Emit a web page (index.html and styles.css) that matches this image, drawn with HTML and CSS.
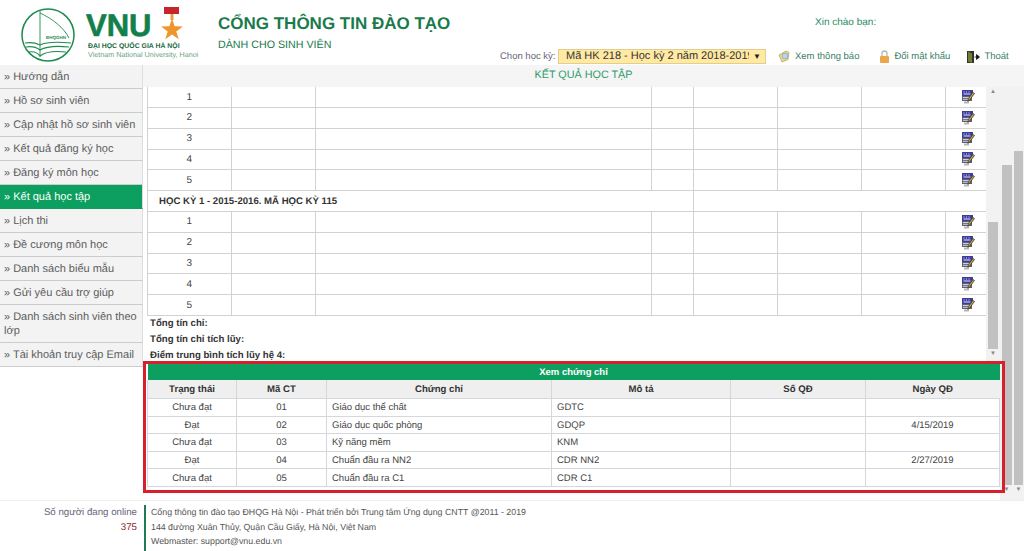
FILE: index.html
```html
<!DOCTYPE html>
<html lang="vi">
<head>
  <meta charset="UTF-8" />
  <meta name="viewport" content="width=device-width, initial-scale=1.0"/>
  <title>Cổng thông tin đào tạo</title>
  <link rel="stylesheet" href="styles.css">
</head>
<body>
  <svg class="defs" width="0" height="0">
    <symbol id="edit" viewBox="0 0 14 14">
      <rect x="1" y="0" width="11" height="6" fill="#3c3c9c"/>
      <path d="M2.500 2h1M5 2h1M7.500 2h1M2.500 4h7" stroke="#dfe0f5" stroke-width="1"/>
      <rect x="1" y="6" width="10" height="5" fill="#5f5f78"/>
      <path d="M2 7.500h7M2 9.300h6" stroke="#dcdce6" stroke-width=".9"/>
      <rect x="3" y="11.500" width="5" height="2" fill="#b5b5b5"/>
      <path d="M13.500 3.500l-4.500 6-2 2 .4-3 4.500-6z" fill="#c9a23a" stroke="#2c2c2c" stroke-width=".7"/>
    </symbol>
  </svg>

  <div class="header">
    <div class="logo">
      <svg class="seal" width="56" height="56" viewBox="0 0 56 56">
        <circle cx="27" cy="28" r="26" fill="#fff" stroke="#1f8a50" stroke-width="1.500"/>
        <path d="M19 4v46M19 6c13 6 24 15 29 25" fill="none" stroke="#1f8a50" stroke-width=".9"/>
        <path d="M4 36c6-1 11 0 15 2 6-3 20-3 31-2M5 40c6-1 10 0 14 3 7-4 20-4 29-3M8 45c5-1 8 0 11 4 6-5 17-5 26-4" fill="none" stroke="#1f8a50" stroke-width="1.100"/>
        <text class="seal-text" x="35" y="32" text-anchor="middle">ĐHQGHN</text>
      </svg>
      <div class="wordmark">
        <div class="vnu-row">
          <span class="vnu">VNU</span>
          <svg width="24" height="36" viewBox="0 0 24 36">
            <rect x="4" y="1" width="15" height="7" fill="#c8242c"/>
            <rect x="10.500" y="8" width="3" height="6" fill="#e2a23a"/>
            <path d="M12 12.500l2.650 7.860 8.250.09-6.620 4.940 2.480 7.910L12 28.500l-6.760 4.800 2.480-7.910-6.620-4.940 8.250-.09z" fill="#f0952a"/>
          </svg>
        </div>
        <div class="vnu-name">ĐẠI HỌC QUỐC GIA HÀ NỘI</div>
        <div class="vnu-en">Vietnam National University, Hanoi</div>
      </div>
    </div>
    <div class="portal">
      <div class="portal-name">CỔNG THÔNG TIN ĐÀO TẠO</div>
      <div class="portal-sub">DÀNH CHO SINH VIÊN</div>
    </div>
    <div class="user-box">
      <div class="hello">Xin chào bạn:</div>
      <div class="tools">
        <span class="term-label">Chọn học kỳ:</span>
        <div class="term-select"><span class="term-value">Mã HK 218 - Học kỳ 2 năm 2018-2019</span><span class="term-arrow">▼</span></div>
        <a class="tool tool-notice">
          <svg width="13" height="13" viewBox="0 0 13 13">
            <path d="M1 5l7-4 3 1.500-1 7-6 2.500z" fill="#f1d98a" stroke="#b79a4c" stroke-width=".7"/>
            <circle cx="7" cy="6" r="3" fill="#b8d3ea" stroke="#7b9ab5" stroke-width=".6"/>
          </svg>Xem thông báo</a>
        <a class="tool tool-lock">
          <svg width="11" height="14" viewBox="0 0 11 14">
            <path d="M3 6V3.500a2.500 2.500 0 015 0V6" fill="none" stroke="#b9b9a8" stroke-width="1.300"/>
            <rect x="1" y="6" width="9" height="7" rx="1" fill="#eda54a"/>
          </svg>Đổi mật khẩu</a>
        <a class="tool tool-exit">
          <svg width="13" height="14" viewBox="0 0 13 14">
            <path d="M0 1h7v12H0z" fill="#33332a"/>
            <path d="M1 1.500l4 2v9.500l-4-1.500z" fill="#6f7f3a"/>
            <path d="M7.500 7h2.500M9.500 4.500L12.500 7l-3 2.500z" fill="#111" stroke="#111" stroke-width=".8"/>
          </svg>Thoát</a>
      </div>
    </div>
  </div>

  <div class="main">
    <ul class="sidebar">
      <li>» Hướng dẫn</li>
      <li>» Hồ sơ sinh viên</li>
      <li>» Cập nhật hồ sơ sinh viên</li>
      <li>» Kết quả đăng ký học</li>
      <li>» Đăng ký môn học</li>
      <li class="active">» Kết quả học tập</li>
      <li>» Lịch thi</li>
      <li>» Đề cương môn học</li>
      <li>» Danh sách biểu mẫu</li>
      <li>» Gửi yêu cầu trợ giúp</li>
      <li>» Danh sách sinh viên theo lớp</li>
      <li>» Tài khoản truy cập Email</li>
    </ul>

    <div class="content">
      <div class="page-title">KẾT QUẢ HỌC TẬP</div>
      <div class="panes">
        <div class="panes-body">
          <div class="results-pane">
            <div class="results">
              <table class="grades">
                <colgroup><col class="c-first"><col class="c-no"><col class="c-name"><col class="c-sm"><col class="c-no"><col class="c-no"><col class="c-no"><col class="c-sm2"></colgroup>
                <tr class="first"><td>1</td><td></td><td></td><td></td><td></td><td></td><td></td><td><svg class="edit"><use href="#edit"/></svg></td></tr>
                <tr><td>2</td><td></td><td></td><td></td><td></td><td></td><td></td><td><svg class="edit"><use href="#edit"/></svg></td></tr>
                <tr><td>3</td><td></td><td></td><td></td><td></td><td></td><td></td><td><svg class="edit"><use href="#edit"/></svg></td></tr>
                <tr><td>4</td><td></td><td></td><td></td><td></td><td></td><td></td><td><svg class="edit"><use href="#edit"/></svg></td></tr>
                <tr><td>5</td><td></td><td></td><td></td><td></td><td></td><td></td><td><svg class="edit"><use href="#edit"/></svg></td></tr>
                <tr class="term-row"><td colspan="4">HỌC KỲ 1 - 2015-2016. MÃ HỌC KỲ 115</td><td colspan="4"></td></tr>
                <tr><td>1</td><td></td><td></td><td></td><td></td><td></td><td></td><td><svg class="edit"><use href="#edit"/></svg></td></tr>
                <tr><td>2</td><td></td><td></td><td></td><td></td><td></td><td></td><td><svg class="edit"><use href="#edit"/></svg></td></tr>
                <tr><td>3</td><td></td><td></td><td></td><td></td><td></td><td></td><td><svg class="edit"><use href="#edit"/></svg></td></tr>
                <tr><td>4</td><td></td><td></td><td></td><td></td><td></td><td></td><td><svg class="edit"><use href="#edit"/></svg></td></tr>
                <tr><td>5</td><td></td><td></td><td></td><td></td><td></td><td></td><td><svg class="edit"><use href="#edit"/></svg></td></tr>
              </table>
              <div class="totals">
                <div>Tổng tín chỉ:</div>
                <div>Tổng tín chỉ tích lũy:</div>
                <div>Điểm trung bình tích lũy hệ 4:</div>
              </div>
            </div>
            <div class="scrollbar bar-results"><span class="arrow">▲</span><span class="thumb"></span><span class="arrow">▼</span></div>
          </div>
          <div class="certs">
            <table class="cert-table">
              <colgroup><col class="k-status"><col class="k-code"><col class="k-name"><col class="k-desc"><col class="k-no"><col></colgroup>
              <tr class="cert-title"><th colspan="6">Xem chứng chỉ</th></tr>
              <tr class="cert-head"><th>Trạng thái</th><th>Mã CT</th><th>Chứng chỉ</th><th>Mô tả</th><th>Số QĐ</th><th>Ngày QĐ</th></tr>
              <tr><td class="mid">Chưa đạt</td><td class="mid">01</td><td>Giáo dục thể chất</td><td>GDTC</td><td></td><td class="mid"></td></tr>
              <tr><td class="mid">Đạt</td><td class="mid">02</td><td>Giáo dục quốc phòng</td><td>GDQP</td><td></td><td class="mid">4/15/2019</td></tr>
              <tr><td class="mid">Chưa đạt</td><td class="mid">03</td><td>Kỹ năng mềm</td><td>KNM</td><td></td><td class="mid"></td></tr>
              <tr><td class="mid">Đạt</td><td class="mid">04</td><td>Chuẩn đầu ra NN2</td><td>CDR NN2</td><td></td><td class="mid">2/27/2019</td></tr>
              <tr><td class="mid">Chưa đạt</td><td class="mid">05</td><td>Chuẩn đầu ra C1</td><td>CDR C1</td><td></td><td class="mid"></td></tr>
            </table>
          </div>
        </div>
        <div class="scrollbar bar-middle"><span class="thumb"></span><span class="arrow">▼</span></div>
        <div class="scrollbar bar-outer"><span class="thumb"></span><span class="arrow">▼</span></div>
      </div>
    </div>
  </div>

  <div class="footer">
    <div class="online">
      <div>Số người đang online</div>
      <div class="online-count">375</div>
    </div>
    <div class="footer-info">
      <div>Cổng thông tin đào tạo ĐHQG Hà Nội - Phát triển bởi Trung tâm Ứng dụng CNTT @2011 - 2019</div>
      <div>144 đường Xuân Thủy, Quận Cầu Giấy, Hà Nội, Việt Nam</div>
      <div>Webmaster: support@vnu.edu.vn</div>
    </div>
  </div>
</body>
</html>
```

FILE: styles.css
```css
html, body {
  margin: 0;
  height: 551px;
  overflow: hidden;
  background: #fff;
  font-family: "Liberation Sans", Arial, sans-serif;
  color: #444;
  text-rendering: geometricPrecision;
}
.defs {
  position: absolute;
}

/* header */
.header {
  display: flex;
  height: 65px;
}
.logo {
  display: flex;
  width: 218px;
  padding: 7px 0 0 21px;
  box-sizing: border-box;
}
.seal {
  flex: none;
}
.seal-text {
  font-size: 4.5px;
  font-weight: bold;
  fill: #1f8a50;
}
.wordmark {
  margin-left: 9px;
}
.vnu-row {
  display: flex;
  height: 37px;
  margin-top: -1px;
}
.vnu-row svg {
  margin-left: 9px;
}
.vnu {
  font-size: 31px;
  font-weight: bold;
  line-height: 40px;
  color: #12804a;
  -webkit-text-stroke: .6px #12804a;
}
.vnu-name {
  margin-left: 2px;
  font-size: 6.9px;
  font-weight: bold;
  line-height: 8px;
  color: #1d6b45;
  white-space: nowrap;
}
.vnu-en {
  margin-left: 2px;
  font-size: 7.2px;
  line-height: 8px;
  color: #6aa383;
  white-space: nowrap;
}
.portal {
  width: 280px;
  padding-top: 14px;
  color: #1a7a4c;
}
.portal-name {
  font-size: 17px;
  font-weight: bold;
  line-height: 19px;
  white-space: nowrap;
}
.portal-sub {
  margin-top: 5px;
  font-size: 10.7px;
  line-height: 14px;
  white-space: nowrap;
}
.user-box {
  flex: 1;
  font-size: 10px;
}
.hello {
  height: 49px;
  padding: 17px 0 0 317px;
  box-sizing: border-box;
  color: #2b8a60;
}
.tools {
  display: flex;
  align-items: center;
  height: 15px;
  margin-left: 2px;
  font-size: 9.5px;
  white-space: nowrap;
}
.term-label {
  width: 58px;
  color: #667;
}
.term-select {
  display: flex;
  justify-content: space-between;
  width: 208px;
  height: 15px;
  padding: 0 4px 0 7px;
  box-sizing: border-box;
  background: #ffe9a3;
  border: 1px solid #e3cf8c;
  font-size: 11px;
  line-height: 13px;
  color: #333;
}
.term-value {
  width: 183px;
  overflow: hidden;
}
.term-arrow {
  font-size: 8px;
  color: #222;
}
.tool {
  display: flex;
  align-items: center;
  color: #3a8069;
}
.tool svg {
  margin-right: 4px;
}
.tool-notice {
  margin-left: 12px;
}
.tool-lock {
  margin-left: 20px;
}
.tool-exit {
  margin-left: 17px;
}

/* sidebar and main */
.main {
  display: flex;
  height: 435px;
}
.sidebar {
  flex: none;
  width: 143px;
  margin: 0;
  padding: 0;
  list-style: none;
  font-size: 11px;
  color: #5c5c5c;
}
.sidebar li {
  padding: 5px 4px 4px;
  line-height: 14px;
  background: #f3f3f3;
  border-bottom: 1px solid #ccc;
  border-right: 1px solid #ddd;
}
.sidebar li.active {
  background: #0d9f5f;
  border-bottom-color: #0d9f5f;
  color: #fff;
}
.content {
  flex: 1;
  min-width: 0;
}
.page-title {
  height: 22px;
  background: #f5f5f5;
  font-size: 10.8px;
  line-height: 21px;
  text-align: center;
  color: #2d9b6c;
}
.panes {
  display: flex;
  height: 413px;
}
.panes-body {
  flex: 1;
  min-width: 0;
}
.results-pane {
  display: flex;
  height: 275px;
}
.results {
  flex: 1;
  min-width: 0;
  padding-left: 4px;
}
.grades {
  width: 839px;
  border-collapse: collapse;
  table-layout: fixed;
  font-size: 10px;
}
.c-first { width: 83.5px; }
.c-no { width: 84px; }
.c-name { width: 336px; }
.c-sm { width: 42px; }
.c-sm2 { width: 41.5px; }
.grades td {
  height: 19.8px;
  padding: 0;
  border: 1px solid #d2d2d2;
  text-align: center;
  vertical-align: middle;
}
.grades .first td {
  height: 20px;
  border-top: 0;
}
.grades .term-row td {
  padding-left: 11px;
  font-size: 9.6px;
  font-weight: bold;
  text-align: left;
  color: #333;
}
.edit {
  display: block;
  width: 14px;
  height: 14px;
  margin-left: 15px;
}
.totals {
  padding-left: 3px;
  font-size: 9.65px;
  font-weight: bold;
  line-height: 16px;
  color: #333;
}

/* fake browser scrollbars, the page has three nested ones */
.scrollbar {
  display: flex;
  flex-direction: column;
  align-items: center;
  flex: none;
  background: #f2f2f2;
  color: #888;
}
.scrollbar .arrow {
  font-size: 6px;
  line-height: 10px;
}
.thumb {
  display: block;
  background: #c1c1c1;
}
.bar-results {
  width: 14px;
}
.bar-results .thumb {
  width: 10px;
  height: 127px;
  margin-top: 125px;
}
.bar-middle {
  width: 13px;
  padding-top: 78px;
  box-sizing: border-box;
}
.bar-middle .thumb {
  width: 10px;
  height: 320px;
}
.bar-outer {
  width: 11px;
  padding-top: 64px;
  box-sizing: border-box;
}
.bar-outer .thumb {
  width: 9px;
  height: 334px;
}

/* certificates, with the red box drawn over it */
.certs {
  position: relative;
  margin: 2px 0 0 4px;
}
.certs::after {
  content: "";
  position: absolute;
  top: -3px;
  left: -4px;
  width: 862px;
  height: 132px;
  box-sizing: border-box;
  border: 3.5px solid #d8202c;
}
.cert-table {
  width: 853px;
  border-collapse: collapse;
  table-layout: fixed;
  font-size: 9.5px;
  color: #444;
}
.k-status { width: 89px; }
.k-code { width: 90px; }
.k-name { width: 225px; }
.k-desc { width: 179px; }
.k-no { width: 135px; }
.cert-title th {
  height: 16px;
  padding: 0;
  background: #0d9f5f;
  color: #fff;
  font-size: 9.5px;
}
.cert-head th {
  height: 17px;
  padding: 1px 0 0;
  background: #efefef;
  border-left: 1px solid #d4d8dc;
  border-bottom: 1px solid #d4d8dc;
  color: #333;
  font-size: 9.6px;
}
.cert-table td {
  height: 17.6px;
  padding: 1px 0 0 5px;
  border: 1px solid #d4d8dc;
  box-sizing: border-box;
}
.cert-table td.mid {
  padding: 1px 0 0;
  text-align: center;
}

/* footer */
.footer {
  display: flex;
  height: 51px;
  padding-top: 4px;
  box-sizing: border-box;
  border-top: 1px solid #eee;
  font-size: 8.8px;
  color: #555;
}
.online {
  width: 137px;
  font-size: 9.7px;
  line-height: 15px;
  text-align: right;
  color: #667;
}
.online-count {
  color: #8b1c24;
}
.footer-info {
  margin-left: 7px;
  padding-left: 5px;
  border-left: 2px solid #217a55;
  line-height: 14.5px;
  white-space: nowrap;
}
```
